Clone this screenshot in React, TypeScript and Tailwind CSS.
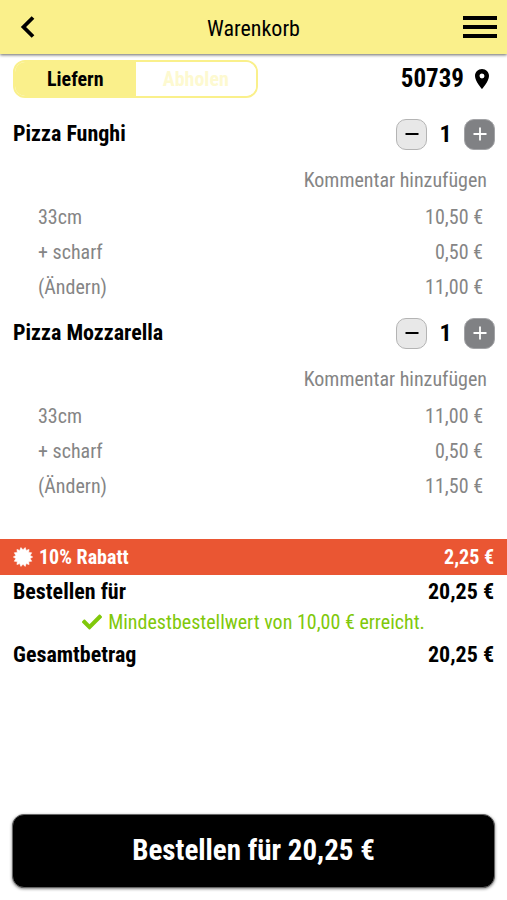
import React, { useState } from 'react';
import { FaCheck } from 'react-icons/fa';
import { MdLocationOn } from 'react-icons/md';

interface CartLine {
  label: string;
  price: string;
  editable?: boolean;
}

interface CartItem {
  id: number;
  name: string;
  lines: CartLine[];
}

const items: CartItem[] = [
  {
    id: 1,
    name: 'Pizza Funghi',
    lines: [
      { label: '33cm', price: '10,50 €' },
      { label: '+ scharf', price: '0,50 €' },
      { label: '(Ändern)', price: '11,00 €', editable: true },
    ],
  },
  {
    id: 2,
    name: 'Pizza Mozzarella',
    lines: [
      { label: '33cm', price: '11,00 €' },
      { label: '+ scharf', price: '0,50 €' },
      { label: '(Ändern)', price: '11,50 €', editable: true },
    ],
  },
];

// Star-shaped discount badge, alternating between outer and inner radius
const SEAL_POINTS = Array.from({ length: 28 }, (_, i) => {
  const r = i % 2 === 0 ? 9.7 : 7.3;
  const a = ((i + 1) * Math.PI) / 14;
  return `${(10 + r * Math.sin(a)).toFixed(2)},${(10 - r * Math.cos(a)).toFixed(2)}`;
}).join(' ');

const CartItemRow: React.FC<{ item: CartItem }> = ({ item }) => {
  const [count, setCount] = useState(1);

  return (
    <li className="pb-[13px]">
      <div className="flex items-center justify-between pr-3 pl-[13px]">
        <h2 className="text-[22px] leading-8 font-bold">{item.name}</h2>
        <div className="flex items-center">
          <button
            type="button"
            aria-label="Weniger"
            onClick={() => setCount(Math.max(0, count - 1))}
            className="flex size-[31px] items-center justify-center rounded-[10px] border border-[#b4b4b4] bg-[#e8e8e8]"
          >
            <svg viewBox="0 0 14 14" className="size-[14px]">
              <path d="M0.5 7h13" stroke="#000" strokeWidth="2" />
            </svg>
          </button>
          <span className="w-[37px] text-center text-2xl leading-8 font-bold">{count}</span>
          <button
            type="button"
            aria-label="Mehr"
            onClick={() => setCount(count + 1)}
            className="flex size-[31px] items-center justify-center rounded-[10px] border border-[#a2a3a6] bg-[#808184] text-white"
          >
            <svg viewBox="0 0 14 14" className="size-[14px]">
              <path d="M0.5 7h13M7 0.5v13" stroke="currentColor" strokeWidth="1.8" />
            </svg>
          </button>
        </div>
      </div>
      <div className="flex justify-end pt-[18px] pr-5 pb-[7px]">
        <button type="button" className="text-xl leading-6 text-[#858585]">Kommentar hinzufügen</button>
      </div>
      <ul className="pr-6 pl-[38px] text-xl text-[#858585]">
        {item.lines.map(line => (
          <li key={line.label} className="flex h-[35px] items-center justify-between">
            {line.editable ? <button type="button">{line.label}</button> : <span>{line.label}</span>}
            <span>{line.price}</span>
          </li>
        ))}
      </ul>
    </li>
  );
};

const App: React.FC = () => {
  const [mode, setMode] = useState<'delivery' | 'pickup'>('delivery');

  return (
    <div className="flex min-h-screen flex-col bg-white font-['Roboto_Condensed',Roboto,'Liberation_Sans',sans-serif] text-black">
      <header className="grid h-[54px] grid-cols-[1fr_auto_1fr] items-center bg-[#faf08b] px-[10px] shadow-[0_1px_3px_rgba(0,0,0,0.6)]">
        <button type="button" aria-label="Zurück" className="justify-self-start pl-[10px]">
          <svg viewBox="0 0 15 22" className="h-[22px] w-[15px]">
            <path d="M13 1.5L3.5 11l9.5 9.5" fill="none" stroke="#000" strokeWidth="3.8" />
          </svg>
        </button>
        <h1 className="pt-1 text-[22px] leading-7">Warenkorb</h1>
        <button type="button" aria-label="Menü" className="justify-self-end">
          <svg viewBox="0 0 34 24" className="h-6 w-[34px]">
            <path d="M0 3h34M0 12h34M0 21h34" stroke="#000" strokeWidth="3.8" />
          </svg>
        </button>
      </header>

      <div className="flex items-center justify-between px-[13px] pt-[6px]">
        <div className="flex h-[38px] w-[245px] overflow-hidden rounded-xl border-2 border-[#faf08b] text-xl font-bold">
          <button
            type="button"
            onClick={() => setMode('delivery')}
            className={`flex-1 pb-px ${mode === 'delivery' ? 'bg-[#faf08b] text-black' : 'bg-white text-[#fdf9d0]'}`}
          >
            Liefern
          </button>
          <button
            type="button"
            onClick={() => setMode('pickup')}
            className={`flex-1 pb-px ${mode === 'pickup' ? 'bg-[#faf08b] text-black' : 'bg-white text-[#fdf9d0]'}`}
          >
            Abholen
          </button>
        </div>
        <button type="button" className="flex items-center gap-[6px] text-[25px] leading-8 font-bold">
          50739
          <MdLocationOn className="size-6" />
        </button>
      </div>

      <main className="flex flex-1 flex-col">
        <ul className="pt-5">
          {items.map(item => (
            <CartItemRow key={item.id} item={item} />
          ))}
        </ul>

        {/* Discount */}
        <div className="mt-[23px] flex h-9 items-center justify-between bg-[#ea5633] px-[13px] text-xl font-bold text-white">
          <span className="flex items-center gap-[6px]">
            <svg viewBox="0 0 20 20" className="size-5">
              <polygon points={SEAL_POINTS} fill="currentColor" stroke="currentColor" strokeWidth="0.6" strokeLinejoin="round" />
            </svg>
            10% Rabatt
          </span>
          <span>2,25 €</span>
        </div>

        {/* Totals */}
        <div className="px-[13px] text-[22px] leading-8 font-bold">
          <div className="flex justify-between pt-px">
            <span>Bestellen für</span>
            <span>20,25 €</span>
          </div>
          <p className="flex h-7 items-center justify-center gap-[6px] text-xl font-normal text-[#80c80a]">
            <FaCheck className="size-5" />
            Mindestbestellwert von 10,00 € erreicht.
          </p>
          <div className="flex justify-between pt-[3px]">
            <span>Gesamtbetrag</span>
            <span>20,25 €</span>
          </div>
        </div>
      </main>

      <footer className="px-3 pb-3">
        <button
          type="button"
          className="h-[74px] w-full rounded-xl border border-[#666] bg-black text-[29px] font-bold text-white shadow-[0_1px_3px_rgba(0,0,0,0.5)]"
        >
          Bestellen für 20,25 €
        </button>
      </footer>
    </div>
  );
};

export default App;
